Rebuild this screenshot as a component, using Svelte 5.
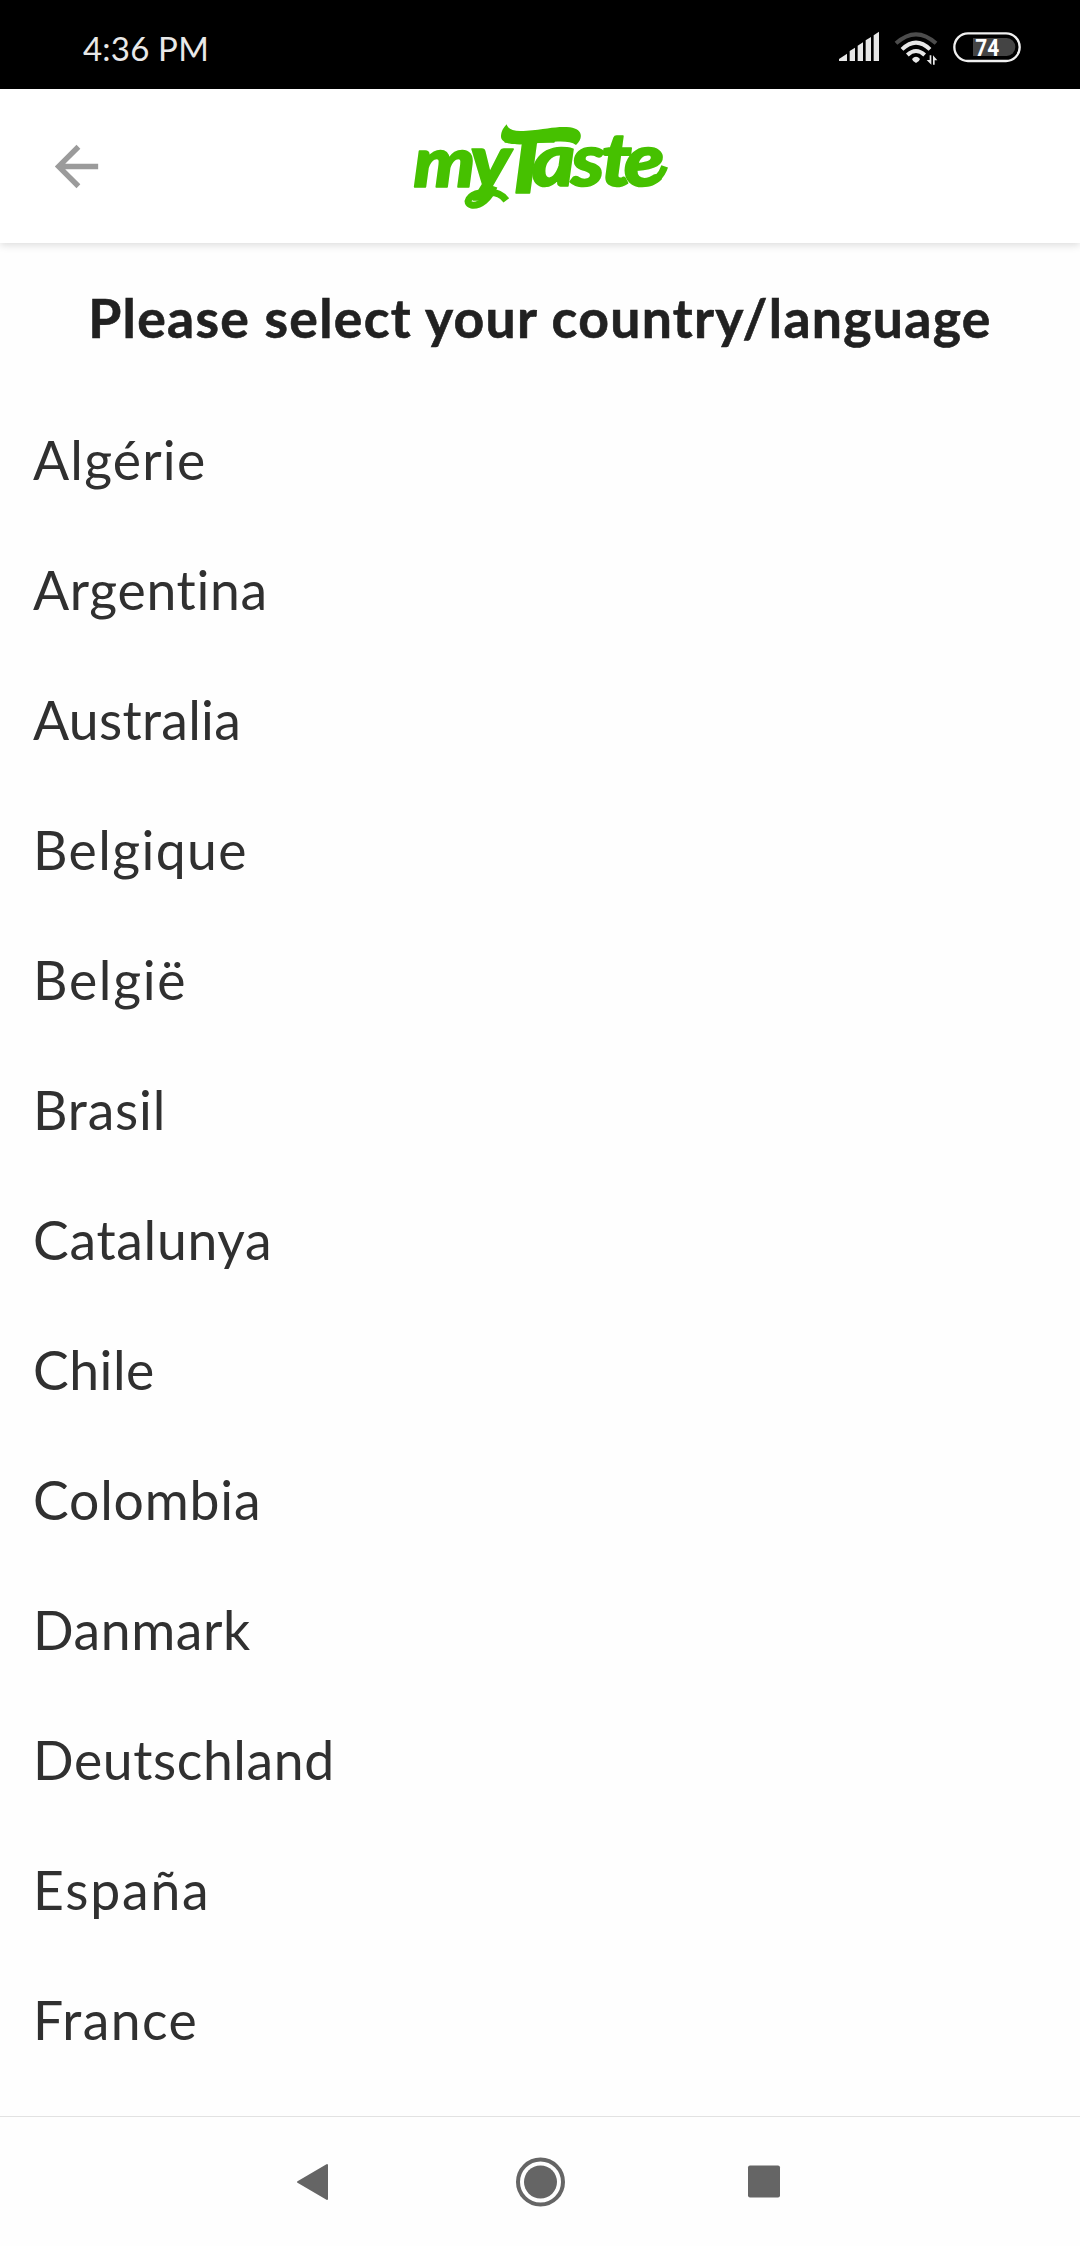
<script>
  const time = '4:36 PM';
  const battery = 74;

  const countries = [
    { name: 'Algérie', tracking: 1.2 },
    { name: 'Argentina', tracking: 0.7 },
    { name: 'Australia', tracking: 0.3 },
    { name: 'Belgique', tracking: 1.4 },
    { name: 'België', tracking: 1.7 },
    { name: 'Brasil', tracking: 0.8 },
    { name: 'Catalunya', tracking: 0.7 },
    { name: 'Chile', tracking: 0.5 },
    { name: 'Colombia', tracking: 0.8 },
    { name: 'Danmark', tracking: 0.6 },
    { name: 'Deutschland', tracking: 0.6 },
    { name: 'España', tracking: 1.8 },
    { name: 'France', tracking: 1.4 }
  ];

  let selected = $state(null);
</script>

<div class="screen">
  <div class="status-bar">
    <span class="time">{time}</span>
    <svg class="status-icons" viewBox="0 0 660 180">
      <!-- Signal -->
      <g fill="#e8e8e8">
        <path d="M57 123V117L81 101V123Z" />
        <path d="M89 123V93L105 83V123Z" />
        <path d="M113 123V77L129 67V123Z" />
        <path d="M137 123V61L153 51V123Z" />
        <path d="M161 123V46L177 35V123Z" />
      </g>
      <!-- Wifi -->
      <g fill="none" stroke-width="12">
        <path d="M228 70Q288 16 348 70" stroke="#4c4c4c" />
        <path d="M246 88Q288 48 330 88" stroke="#e8e8e8" />
        <path d="M262 105Q288 81 314 105" stroke="#e8e8e8" />
      </g>
      <path d="M276 117Q288 104 300 117Q298 125 288 129Q278 125 276 117Z" fill="#e8e8e8" />
      <path d="M329 106H334V134L320 120H329ZM339 134V106L352 121H344V134Z" fill="#e8e8e8" />
      <!-- Battery -->
      <rect x="403" y="40" width="196" height="83" rx="41" fill="none" stroke="#f0f0f0" stroke-width="7" />
      <path d="M459 54H560A26 27 0 0 1 560 108H459Z" fill="#444" />
      <text x="466" y="107" textLength="72" lengthAdjust="spacingAndGlyphs" class="level">{battery}</text>
    </svg>
  </div>

  <header>
    <button class="back" aria-label="Back">
      <svg viewBox="0 0 24 24">
        <path d="M20 11H7.83l5.59-5.59L12 4l-8 8 8 8 1.41-1.41L7.83 13H20z" fill="#9b9b9b" />
      </svg>
    </button>
    <svg class="logo" viewBox="0 0 840 330">
      <text transform="scale(1.1 1)" y="228"><tspan x="37" class="wide">m</tspan><tspan x="191">y</tspan><tspan x="274" y="245" class="tall">T</tspan><tspan x="360 467 549 611" y="226">aste</tspan></text>
      <!-- swash over the capital and loop under the y -->
      <path d="M320 40C325 58 345 62 380 59C440 54 475 44 510 49C545 54 553 78 528 102C505 85 460 92 390 99C335 103 302 98 303 75C304 59 311 50 320 40Z" />
      <path d="M282 226C270 262 240 286 214 282C194 276 206 252 240 246C280 238 306 250 319 268" class="loop" />
      <path d="M740 214C765 212 785 194 794 166" class="loop" />
    </svg>
  </header>

  <main>
    <h1>Please select your country/language</h1>
    <ul>
      {#each countries as country}
        <li>
          <button
            style="letter-spacing: {country.tracking}px"
            aria-pressed={selected === country.name}
            onclick={() => (selected = country.name)}
          >
            {country.name}
          </button>
        </li>
      {/each}
    </ul>
  </main>

  <nav>
    <svg viewBox="0 0 50 50">
      <path d="M36 8V42L7 25Z" stroke-linejoin="round" stroke="#656565" stroke-width="2" />
    </svg>
    <svg viewBox="0 0 50 50">
      <circle cx="25.500" cy="25" r="22.500" fill="none" stroke="#656565" stroke-width="4" />
      <circle cx="25.500" cy="25" r="16.500" />
    </svg>
    <svg viewBox="0 0 50 50">
      <rect x="9" y="8.500" width="32" height="32" rx="2" />
    </svg>
  </nav>
</div>

<style>
  :global(body) {
    margin: 0;
    background: #fefefe;
  }

  .screen {
    display: flex;
    flex-direction: column;
    width: 1080px;
    height: 2246px;
    overflow: hidden;
    background: #fefefe;
    font-family: Lato, 'Open Sans', sans-serif;
  }

  .status-bar {
    display: flex;
    justify-content: space-between;
    flex: none;
    height: 89px;
    padding: 0 40px 0 83px;
    background: #000;
  }

  .time {
    color: #e8e8e8;
    font-size: 33px;
    line-height: 96px;
    letter-spacing: 0.2px;
  }

  .status-icons {
    width: 220px;
    height: 60px;
    margin-top: 20px;
  }

  .level {
    fill: #fff;
    font: 700 72px Roboto, sans-serif;
  }

  header {
    display: grid;
    grid-template-columns: 400px 280px 400px;
    align-items: center;
    flex: none;
    height: 154px;
    background: #fff;
    box-shadow: 0 2px 8px rgba(0, 0, 0, 0.14);
  }

  button {
    padding: 0;
    border: none;
    background: none;
    color: inherit;
    font: inherit;
    cursor: pointer;
  }

  .back {
    width: 65px;
    height: 65px;
    margin-left: 44px;
  }

  .back svg {
    display: block;
    width: 65px;
    height: 65px;
  }

  .logo {
    width: 280px;
    height: 110px;
    overflow: visible;
    fill: #46c100;
  }

  .logo text {
    font: italic 900 224px Lato, sans-serif;
    stroke: #46c100;
    stroke-width: 5;
    stroke-linejoin: round;
  }

  .logo .wide {
    font-size: 212px;
  }

  .logo .tall {
    font-size: 250px;
  }

  .loop {
    fill: none;
    stroke: #46c100;
    stroke-width: 21;
  }

  main {
    flex: 1;
    min-height: 0;
  }

  h1 {
    margin: 42px 0 50px;
    color: #212121;
    font-size: 53.5px;
    font-weight: 700;
    letter-spacing: 1.3px;
    line-height: 64px;
    text-align: center;
    white-space: nowrap;
    -webkit-text-stroke: 0.6px #212121;
  }

  ul {
    margin: 0;
    padding: 0;
    list-style: none;
  }

  li {
    height: 130px;
    padding-left: 33px;
    color: #303030;
    font-size: 53.5px;
    line-height: 121px;
  }

  li button {
    font-variant-ligatures: none;
  }

  nav {
    display: flex;
    justify-content: center;
    align-items: center;
    gap: 174px;
    flex: none;
    height: 129px;
    border-top: 1px solid #e2e2e2;
  }

  nav svg {
    width: 50px;
    height: 50px;
    fill: #656565;
  }
</style>
